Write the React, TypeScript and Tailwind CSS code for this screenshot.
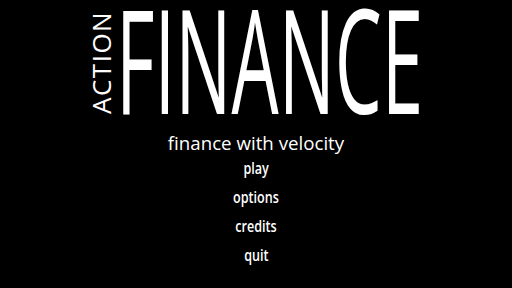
export default function App() {
  const items = ["play", "options", "credits", "quit"];

  return (
    <div className="w-[512px] h-[288px] bg-black text-white overflow-hidden flex flex-col items-center font-['Open_Sans',sans-serif]">
      {/* title block */}
      <div className="flex items-start mt-[10px] h-[104px]">
        <div className="[writing-mode:vertical-rl] rotate-180 text-[26px] leading-[22px] h-[104px] w-[22px] tracking-[1.5px] text-center mr-[4px]">
          ACTION
        </div>
        <div className="w-[306px] h-[104px]">
          <span className="block text-[74.6px] leading-[50.8px] origin-top scale-y-[1.93] whitespace-nowrap">
            FINANCE
          </span>
        </div>
      </div>

      <div className="text-[18.7px] leading-[20px] mt-[19px]">finance with velocity</div>

      <ul className="flex flex-col items-center">
        {items.map((item) => (
          <li key={item} className="text-[17px] leading-[29px] font-semibold scale-x-[0.74]">
            {item}
          </li>
        ))}
      </ul>
    </div>
  );
}
